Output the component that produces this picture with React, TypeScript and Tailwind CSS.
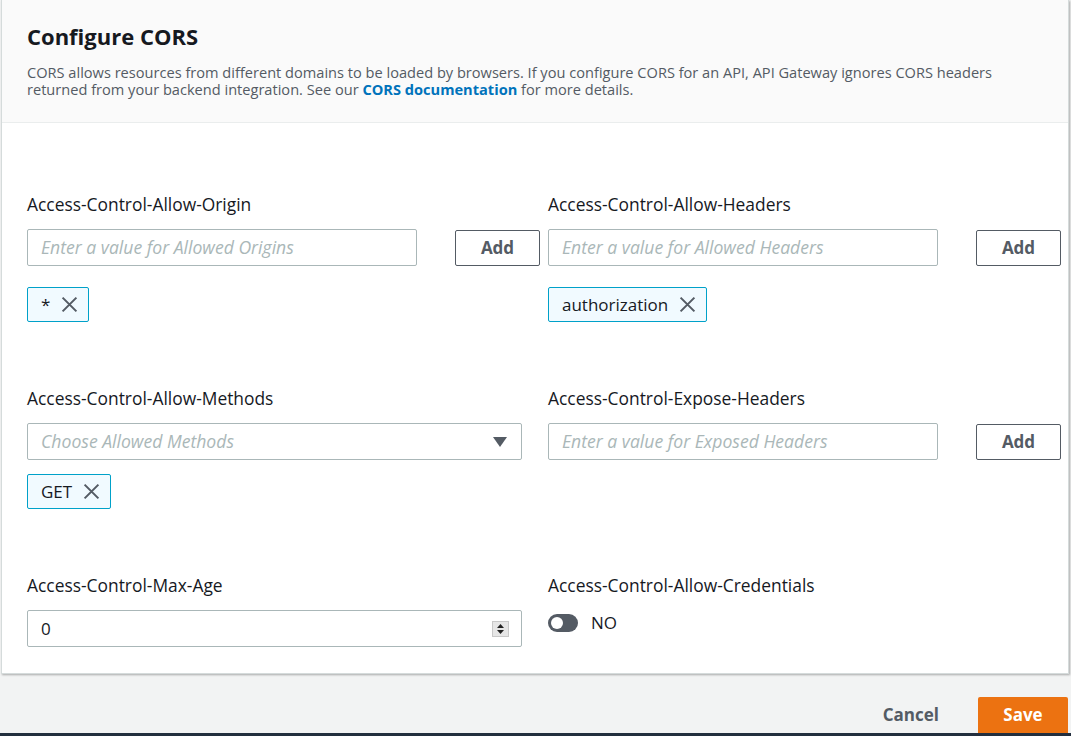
import { ReactNode } from 'react';

const font = { fontFamily: '"Open Sans", "Noto Sans", Arial, sans-serif' };

function CloseIcon() {
  return (
    <svg width="17" height="17" viewBox="0 0 16 16" className="text-[#545b64]">
      <path d="M1.5 1.5 L14.5 14.5 M14.5 1.5 L1.5 14.5" stroke="currentColor" strokeWidth="1.9" fill="none" />
    </svg>
  );
}

function Token({ label }: { label: string }) {
  return (
    <div className="inline-flex items-center h-[35px] pl-[13px] pr-[10px] gap-[11px] bg-[#f1faff] border border-[#00a1c9] rounded-[2px] text-[17px] text-[#16191f]">
      <span>{label}</span>
      <CloseIcon />
    </div>
  );
}

function Label({ children }: { children: ReactNode }) {
  return <div className="text-[17.4px] leading-[20px] text-[#16191f] mb-[15px]">{children}</div>;
}

function TextInput({ placeholder }: { placeholder: string }) {
  return (
    <div className="w-[390px] h-[37px] border border-[#aab7b8] rounded-[2px] bg-white flex items-center px-[13px] text-[17.6px] italic text-[#aab7b8]">
      {placeholder}
    </div>
  );
}

function AddButton() {
  return (
    <button className="ml-[38px] w-[85px] h-[36px] border border-[#545b64] rounded-[2px] bg-white text-[17px] font-bold text-[#545b64]">
      Add
    </button>
  );
}

export default function App() {
  return (
    <div className="w-[1071px] h-[736px] bg-[#f2f3f3] flex flex-col overflow-hidden" style={font}>
      {/* Card */}
      <div className="ml-[1px] w-[1068px] bg-white border border-[#d5dbdb] border-t-0 shadow-[1px_1px_2px_rgba(0,0,0,0.3)]">
        <div className="bg-[#fafafa] border-b border-[#eaeded] pl-[25px] pr-[20px] pt-[22px] pb-[24px]">
          <h2 className="text-[22px] leading-[28px] font-bold text-[#16191f]">Configure CORS</h2>
          <p className="mt-[14px] text-[14.6px] leading-[17px] text-[#545b64] w-[990px]">
            CORS allows resources from different domains to be loaded by browsers. If you configure CORS for an API, API Gateway ignores CORS headers returned from your backend integration. See our{' '}
            <span className="font-bold text-[#0073bb]">CORS documentation</span> for more details.
          </p>
        </div>

        <div className="pl-[25px] pt-[71px] pb-[26px] grid grid-cols-[521px_521px]">
          {/* Row 1 */}
          <div>
            <Label>Access-Control-Allow-Origin</Label>
            <div className="flex items-center">
              <TextInput placeholder="Enter a value for Allowed Origins" />
              <AddButton />
            </div>
            <div className="mt-[21px]">
              <Token label="*" />
            </div>
          </div>
          <div>
            <Label>Access-Control-Allow-Headers</Label>
            <div className="flex items-center">
              <TextInput placeholder="Enter a value for Allowed Headers" />
              <AddButton />
            </div>
            <div className="mt-[21px]">
              <Token label="authorization" />
            </div>
          </div>

          {/* Row 2 */}
          <div className="mt-[66px]">
            <Label>Access-Control-Allow-Methods</Label>
            <div className="w-[495px] h-[37px] border border-[#aab7b8] rounded-[2px] bg-white flex items-center justify-between pl-[13px] pr-[14px] text-[17.6px] italic text-[#aab7b8]">
              <span>Choose Allowed Methods</span>
              <svg width="14" height="10" viewBox="0 0 14 10">
                <path d="M0 0 H14 L7 10 Z" fill="#545b64" />
              </svg>
            </div>
            <div className="mt-[14px]">
              <Token label="GET" />
            </div>
          </div>
          <div className="mt-[66px]">
            <Label>Access-Control-Expose-Headers</Label>
            <div className="flex items-center">
              <TextInput placeholder="Enter a value for Exposed Headers" />
              <AddButton />
            </div>
          </div>

          {/* Row 3 */}
          <div className="mt-[66px]">
            <Label>Access-Control-Max-Age</Label>
            <div className="w-[495px] h-[37px] border border-[#aab7b8] rounded-[2px] bg-white flex items-center justify-between pl-[13px] pr-[12px] text-[17px] text-[#16191f]">
              <span>0</span>
              <div className="w-[17px] h-[16px] bg-[#e6e6e6] border border-[#c8c8c8] flex flex-col items-center justify-center gap-[2px]">
                <svg width="7" height="4" viewBox="0 0 7 4"><path d="M0 4 L3.5 0 L7 4 Z" fill="#222" /></svg>
                <svg width="7" height="4" viewBox="0 0 7 4"><path d="M0 0 H7 L3.5 4 Z" fill="#222" /></svg>
              </div>
            </div>
          </div>
          <div className="mt-[66px]">
            <Label>Access-Control-Allow-Credentials</Label>
            <div className="flex items-center gap-[13px] mt-[15px]">
              <div className="w-[30px] h-[18px] rounded-full bg-[#545b64] flex items-center pl-[3px]">
                <div className="w-[12px] h-[12px] rounded-full bg-white" />
              </div>
              <span className="text-[17px] text-[#16191f]">NO</span>
            </div>
          </div>
        </div>
      </div>

      {/* Footer */}
      <div className="flex-1 flex items-end justify-end">
        <div className="flex items-center pr-[3px]">
          <button className="text-[17px] font-bold text-[#545b64] mr-[39px]">Cancel</button>
          <button className="w-[90px] h-[36px] bg-[#ec7211] text-white text-[17px] font-bold rounded-t-[2px]">Save</button>
        </div>
      </div>
      <div className="h-[3px] bg-[#232f3e]" />
    </div>
  );
}
